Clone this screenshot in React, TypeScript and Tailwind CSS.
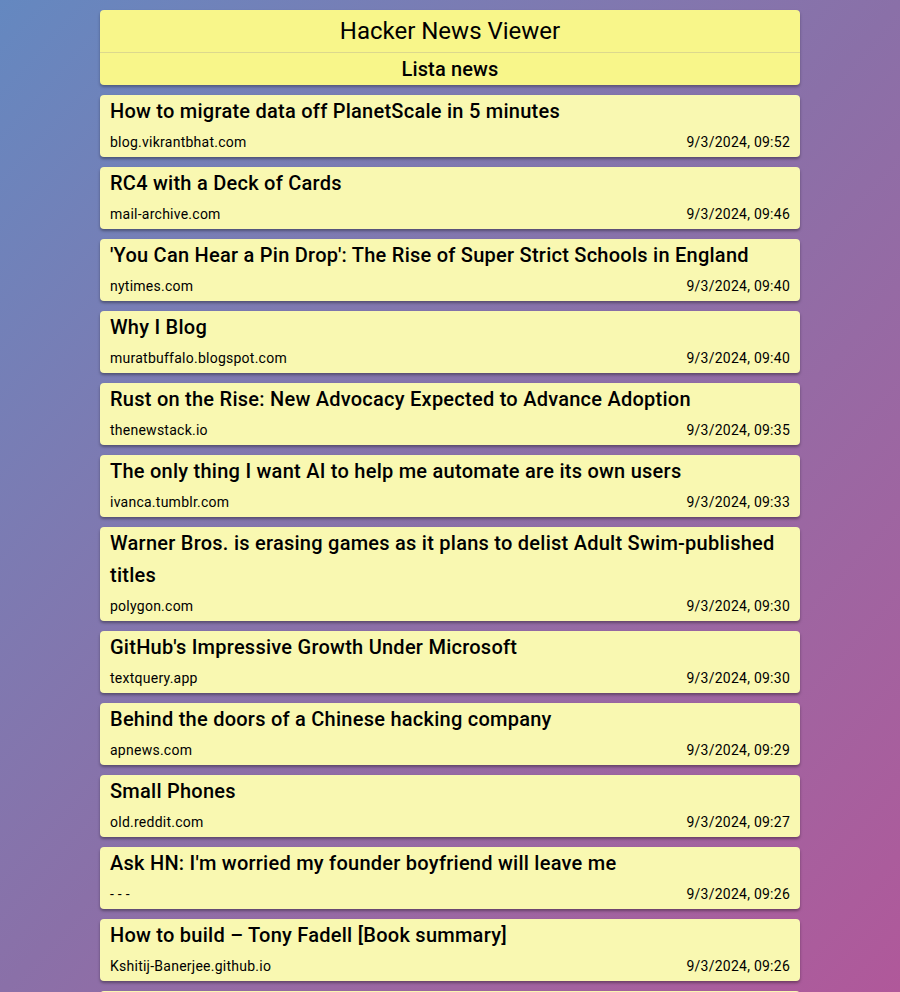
import React from 'react';

type NewsItem = {
  title: string;
  site: string;
  time: string;
};

const news: NewsItem[] = [
  { title: 'How to migrate data off PlanetScale in 5 minutes', site: 'blog.vikrantbhat.com', time: '9/3/2024, 09:52' },
  { title: 'RC4 with a Deck of Cards', site: 'mail-archive.com', time: '9/3/2024, 09:46' },
  { title: "'You Can Hear a Pin Drop': The Rise of Super Strict Schools in England", site: 'nytimes.com', time: '9/3/2024, 09:40' },
  { title: 'Why I Blog', site: 'muratbuffalo.blogspot.com', time: '9/3/2024, 09:40' },
  { title: 'Rust on the Rise: New Advocacy Expected to Advance Adoption', site: 'thenewstack.io', time: '9/3/2024, 09:35' },
  { title: 'The only thing I want AI to help me automate are its own users', site: 'ivanca.tumblr.com', time: '9/3/2024, 09:33' },
  { title: 'Warner Bros. is erasing games as it plans to delist Adult Swim-published titles', site: 'polygon.com', time: '9/3/2024, 09:30' },
  { title: "GitHub's Impressive Growth Under Microsoft", site: 'textquery.app', time: '9/3/2024, 09:30' },
  { title: 'Behind the doors of a Chinese hacking company', site: 'apnews.com', time: '9/3/2024, 09:29' },
  { title: 'Small Phones', site: 'old.reddit.com', time: '9/3/2024, 09:27' },
  { title: "Ask HN: I'm worried my founder boyfriend will leave me", site: '- - -', time: '9/3/2024, 09:26' },
  { title: 'How to build – Tony Fadell [Book summary]', site: 'Kshitij-Banerjee.github.io', time: '9/3/2024, 09:26' },
  { title: 'The Tyranny of the Marginal User', site: 'nothinghuman.substack.com', time: '9/3/2024, 09:21' },
  { title: 'Show HN: A tiny terminal text editor', site: 'github.com', time: '9/3/2024, 09:18' },
];

function NewsCard({ item }: { item: NewsItem }) {
  return (
    <div className="bg-[#f9f8b1] rounded-[4px] shadow-[0_2px_3px_rgba(0,0,0,0.35)] px-[10px] pb-[5px]">
      <div className="text-[20px] leading-[32px] font-medium tracking-[0.25px] text-black">{item.title}</div>
      <div className="mt-[5px] flex justify-between text-[14px] leading-[20px] tracking-[0.25px] text-black">
        <span>{item.site}</span>
        <span>{item.time}</span>
      </div>
    </div>
  );
}

export default function App() {
  return (
    <div className="min-h-screen bg-fixed bg-gradient-to-br from-[#6488c0] via-[#8a70a8] to-[#b0589a] font-['Roboto',_'Liberation_Sans',_sans-serif]">
      <div className="w-[700px] mx-auto pt-[10px] pb-[10px] flex flex-col gap-[10px]">
        {/* header */}
        <div className="bg-[#f8f68a] rounded-[4px] shadow-[0_2px_3px_rgba(0,0,0,0.3)] text-center text-black">
          <div className="h-[42px] flex items-center justify-center text-[24px]">Hacker News Viewer</div>
          <div className="border-t border-[#dcd88e] h-[33px] text-[20px] leading-[32px] font-medium tracking-[0.15px]">Lista news</div>
        </div>

        {news.map((item, i) => (
          <NewsCard key={i} item={item} />
        ))}
      </div>
    </div>
  );
}
